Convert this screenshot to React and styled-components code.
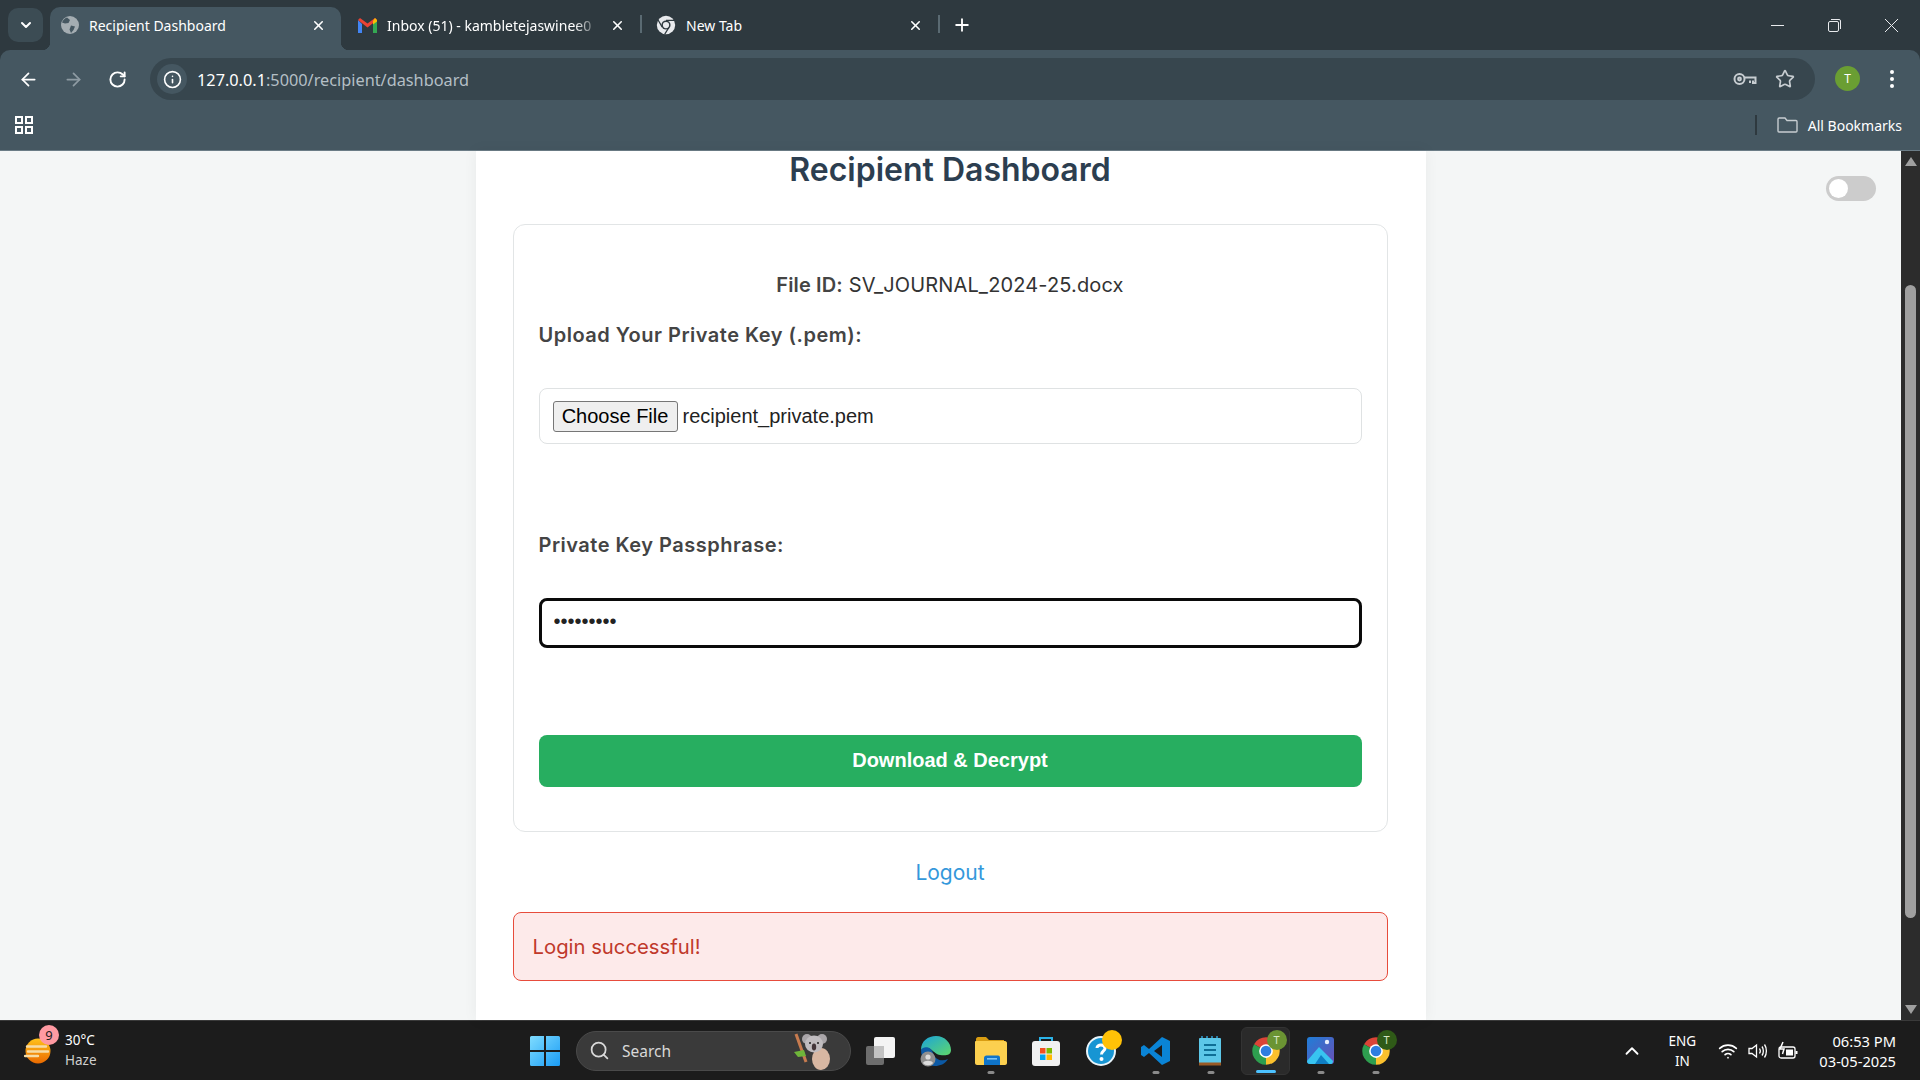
import React from "react";
import styled, { createGlobalStyle } from "styled-components";
import {
  ArrowLeft,
  ArrowRight,
  ChevronDown,
  ChevronUp,
  Info,
  Plus,
  RotateCw,
  Search,
  Star,
  Wifi,
  X,
} from "lucide-react";

const GlobalStyle = createGlobalStyle`
  html, body {
    margin: 0;
    padding: 0;
    height: 100%;
    overflow: hidden;
  }
  * { box-sizing: border-box; }
`;

const Screen = styled.div`
  width: 1920px;
  height: 1080px;
  display: flex;
  flex-direction: column;
  overflow: hidden;
  background: #2e393f;
  font-family: "Noto Sans", sans-serif;
`;

/* browser chrome */
const TabStrip = styled.div`
  height: 50px;
  flex: none;
  background: #2e393f;
  display: flex;
  align-items: flex-end;
  padding-left: 8px;
  position: relative;
`;

const TabSearch = styled.div`
  width: 35px;
  height: 34px;
  margin: 0 7px 8px 0;
  border-radius: 10px;
  background: #3c4c54;
  color: #fff;
  display: flex;
  align-items: center;
  justify-content: center;
`;

const Tab = styled.div`
  width: ${(p) => p.$width}px;
  height: 43px;
  padding: 0 15px 7px ${(p) => p.$left}px;
  display: flex;
  align-items: center;
  gap: 10px;
  color: #fff;
  font-size: 14px;
  background: ${(p) => (p.$active ? "#455761" : "transparent")};
  border-radius: 10px 10px 0 0;
  position: relative;
  & > svg { flex: none; }
  ${(p) =>
    p.$active &&
    `
    &::before, &::after {
      content: "";
      position: absolute;
      bottom: 0;
      width: 8px;
      height: 8px;
    }
    &::before {
      left: -8px;
      background: radial-gradient(circle at 0 0, transparent 8px, #455761 8.5px);
    }
    &::after {
      right: -8px;
      background: radial-gradient(circle at 100% 0, transparent 8px, #455761 8.5px);
    }
  `}
`;

const TabTitle = styled.span`
  flex: 1;
  white-space: nowrap;
  mask-image: ${(p) =>
    p.$fade ? "linear-gradient(90deg, #000 88%, transparent)" : "none"};
`;

const TabDivider = styled.div`
  width: 2px;
  height: 18px;
  margin-bottom: 17px;
  background: #5a6a72;
  flex: none;
`;

const NewTab = styled.div`
  margin: 0 0 15px 12px;
  color: #fff;
  display: flex;
`;

const WindowControls = styled.div`
  margin-left: auto;
  align-self: flex-start;
  display: flex;
  color: #e8eaed;
`;

const WindowButton = styled.div`
  width: 57px;
  height: 50px;
  display: flex;
  align-items: center;
  justify-content: center;
`;

const Toolbar = styled.div`
  height: 50px;
  flex: none;
  background: #455761;
  border-radius: 10px 10px 0 0;
  display: flex;
  padding-top: 8px;
  color: #fff;
`;

const NavGroup = styled.div`
  width: 150px;
  height: 42px;
  padding-left: 18px;
  display: flex;
  align-items: center;
  gap: 24px;
`;

const Omnibox = styled.div`
  width: 1665px;
  height: 42px;
  border-radius: 21px;
  background: #37464e;
  display: flex;
  align-items: center;
  padding: 0 20px 0 7px;
`;

const SiteInfo = styled.div`
  width: 30px;
  height: 30px;
  border-radius: 50%;
  background: #455761;
  display: flex;
  align-items: center;
  justify-content: center;
  margin-right: 10px;
`;

const Url = styled.div`
  flex: 1;
  font-size: 16.3px;
  line-height: 24px;
  padding-top: 1px;
  color: #b4bfc5;
  b {
    font-weight: 400;
    color: #fff;
  }
`;

const OmniIcons = styled.div`
  display: flex;
  align-items: center;
  gap: 18px;
  color: #c7cdd1;
`;

const Avatar = styled.div`
  width: 25px;
  height: 25px;
  margin: 8px 0 0 20px;
  border-radius: 50%;
  background: #6a9e33;
  color: #fff;
  font-size: 12px;
  display: flex;
  align-items: center;
  justify-content: center;
`;

const MenuDots = styled.div`
  margin: 8px 0 0 30px;
  height: 25px;
  display: flex;
  flex-direction: column;
  justify-content: center;
  gap: 3px;
  span {
    width: 4px;
    height: 4px;
    border-radius: 50%;
    background: #fff;
  }
`;

const BookmarkBar = styled.div`
  height: 51px;
  flex: none;
  background: #455761;
  border-bottom: 1px solid #6b7c86;
  display: flex;
  align-items: center;
  padding: 0 18px 0 15px;
  color: #fff;
`;

const AllBookmarks = styled.div`
  margin-left: auto;
  display: flex;
  align-items: center;
  gap: 10px;
  font-size: 14px;
`;

const BarDivider = styled.div`
  width: 2px;
  height: 20px;
  background: #2e393f;
  margin-right: 10px;
`;

/* page */
const Viewport = styled.div`
  flex: 1;
  min-height: 0;
  display: flex;
  background: #f4f6f6;
  position: relative;
`;

const PageArea = styled.div`
  flex: 1;
  display: flex;
  justify-content: center;
`;

const Card = styled.main`
  width: 950px;
  height: 100%;
  background: #fff;
  padding: 0 38px 0 37px;
  box-shadow: 0 0 14px rgba(0, 0, 0, 0.05);
  color: #2c3e50;
  font-family: Inter, "Noto Sans", sans-serif;
`;

const Title = styled.h1`
  margin: 0;
  height: 36px;
  line-height: 38px;
  font-size: 32px;
  font-weight: 600;
  text-align: center;
  color: #2c3e50;
`;

const Panel = styled.form`
  margin-top: 37px;
  height: 608px;
  border: 1px solid #e2e5e6;
  border-radius: 12px;
  padding: 45px 25px 0;
  display: flex;
  flex-direction: column;
`;

const FileId = styled.p`
  margin: 0;
  height: 30px;
  line-height: 30px;
  text-align: center;
  font-size: 20px;
  letter-spacing: 0.14px;
  color: #333;
  b {
    font-weight: 600;
    color: #444;
  }
`;

const FieldLabel = styled.label`
  display: block;
  height: 24px;
  line-height: 24px;
  font-size: 20px;
  letter-spacing: 0.5px;
  font-weight: 600;
  color: #444;
  margin-top: ${(p) => p.$top}px;
`;

const FileBox = styled.div`
  margin-top: 41px;
  height: 56px;
  border: 1px solid #dfe2e3;
  border-radius: 8px;
  padding: 0 13px;
  display: flex;
  align-items: center;
  gap: 5px;
  font-family: "Liberation Sans", Arial, sans-serif;
  font-size: 20px;
  color: #222;
`;

const ChooseFile = styled.button`
  height: 31px;
  width: 125px;
  padding: 0;
  background: #efefef;
  border: 1px solid #767676;
  border-radius: 3px;
  font-family: inherit;
  font-size: 20px;
  color: #000;
`;

const PassInput = styled.input`
  display: block;
  margin-top: 41px;
  width: 100%;
  height: 50px;
  padding: 0 12px 3px;
  border: 3px solid #0a0a0a;
  border-radius: 8px;
  outline: none;
  font-family: "Liberation Sans", Arial, sans-serif;
  font-size: 20px;
  color: #222;
`;

const Submit = styled.button`
  margin-top: 87px;
  width: 100%;
  height: 52px;
  padding: 0 0 2px;
  border: none;
  border-radius: 8px;
  background: #27ae60;
  color: #fff;
  font-family: "Liberation Sans", Arial, sans-serif;
  font-weight: 700;
  font-size: 20px;
`;

const LogoutLink = styled.a`
  display: block;
  margin-top: 25px;
  height: 30px;
  line-height: 32px;
  text-align: center;
  font-size: 21px;
  color: #3498db;
`;

const Flash = styled.div`
  margin-top: 25px;
  height: 69px;
  padding: 0 19px;
  display: flex;
  align-items: center;
  background: #fdeaea;
  border: 1px solid #e74c3c;
  border-radius: 8px;
  font-size: 20.3px;
  color: #c0392b;
`;

const Toggle = styled.div`
  position: absolute;
  top: 25px;
  right: 44px;
  width: 50px;
  height: 25px;
  border-radius: 13px;
  background: #ccc;
  &::before {
    content: "";
    position: absolute;
    top: 3px;
    left: 3px;
    width: 19px;
    height: 19px;
    border-radius: 50%;
    background: #fff;
  }
`;

const Scrollbar = styled.div`
  width: 19px;
  flex: none;
  background: #2c2c2c;
  display: flex;
  flex-direction: column;
  align-items: center;
  justify-content: space-between;
  padding: 6px 0;
  position: relative;
`;

const ScrollThumb = styled.div`
  position: absolute;
  top: 134px;
  left: 4px;
  width: 11px;
  height: 633px;
  border-radius: 6px;
  background: #9f9f9f;
`;

const ScrollArrow = styled.div`
  width: 0;
  height: 0;
  border-left: 6px solid transparent;
  border-right: 6px solid transparent;
  ${(p) =>
    p.$down ? "border-top: 9px solid #9f9f9f;" : "border-bottom: 9px solid #9f9f9f;"}
`;

/* taskbar */
const Taskbar = styled.footer`
  height: 60px;
  flex: none;
  background: #1c1c1c;
  border-top: 1px solid #3a3a3a;
  display: flex;
  align-items: center;
  color: #fff;
`;

const Weather = styled.div`
  width: 517px;
  padding-left: 24px;
  display: flex;
  align-items: center;
  gap: 11px;
  flex: none;
`;

const WeatherIcon = styled.div`
  position: relative;
  width: 30px;
  height: 30px;
  display: flex;
`;

const WeatherBadge = styled.span`
  position: absolute;
  top: -11px;
  left: 15px;
  width: 20px;
  height: 20px;
  border-radius: 50%;
  background: #ff9aa2;
  color: #1c1c1c;
  font-size: 13px;
  display: flex;
  align-items: center;
  justify-content: center;
`;

const WeatherText = styled.div`
  font-size: 13.5px;
  line-height: 20px;
  margin-top: -2px;
  span {
    display: block;
    color: #cfcfcf;
  }
`;

const TaskItem = styled.div`
  position: relative;
  width: 55px;
  height: 48px;
  flex: none;
  display: flex;
  align-items: center;
  justify-content: center;
  border-radius: 6px;
  ${(p) =>
    p.$active &&
    "background: #2a2a2a; border: 1px solid #333; width: 49px; margin: 0 3px;"}
`;

const RunDot = styled.span`
  position: absolute;
  bottom: 1px;
  left: 50%;
  transform: translateX(-50%);
  height: 3px;
  border-radius: 2px;
  width: ${(p) => (p.$active ? "20px" : "7px")};
  background: ${(p) => (p.$active ? "#4cc2ff" : "#8a8a8a")};
`;

const SearchPill = styled.div`
  width: 275px;
  height: 40px;
  margin: 0 2px 0 4px;
  flex: none;
  border-radius: 20px;
  background: #3a3a3a;
  border: 1px solid #4a4a4a;
  padding: 0 14px 0 12px;
  display: flex;
  align-items: center;
  gap: 12px;
  color: #d8d8d8;
  font-size: 15.5px;
  span {
    flex: 1;
  }
`;

const Tray = styled.div`
  margin-left: auto;
  padding-right: 24px;
  display: flex;
  align-items: center;
  font-size: 13.5px;
`;

const TrayIcon = styled.div`
  display: flex;
  margin-left: ${(p) => p.$left || 0}px;
`;

const Lang = styled.div`
  margin-left: 19px;
  width: 40px;
  text-align: center;
  line-height: 20px;
`;

const Clock = styled.div`
  margin-left: 21px;
  text-align: right;
  line-height: 20px;
  font-size: 14.7px;
`;

const BadgeWrap = styled.div`
  position: relative;
  display: flex;
`;

const TBadge = styled.span`
  position: absolute;
  top: -6px;
  right: -6px;
  width: 20px;
  height: 20px;
  border-radius: 50%;
  background: ${(p) => p.$bg};
  color: #d7e6c4;
  font-size: 11px;
  display: flex;
  align-items: center;
  justify-content: center;
`;

/* drawn icons */
const ChromeLogo = ({ size = 30, mono }) => (
  <svg width={size} height={size} viewBox="0 0 48 48">
    {mono ? (
      <>
        <circle cx="24" cy="24" r="22" fill="#e8eaed" />
        <circle cx="24" cy="24" r="11" fill="#2e393f" />
        <circle cx="24" cy="24" r="7.5" fill="#e8eaed" />
        <path d="M24 13H44M15 29L5 12M31 30L21 46" stroke="#2e393f" strokeWidth="3" />
      </>
    ) : (
      <>
        <path d="M24 24L4.95 13A22 22 0 0 1 43.05 13Z" fill="#db4437" />
        <path d="M24 24L43.05 13A22 22 0 0 1 24 46Z" fill="#fbc02d" />
        <path d="M24 24L24 46A22 22 0 0 1 4.95 13Z" fill="#2e9e4f" />
        <circle cx="24" cy="24" r="11" fill="#fff" />
        <circle cx="24" cy="24" r="8.5" fill="#2f7de1" />
      </>
    )}
  </svg>
);

const GlobeFavicon = () => (
  <svg width="18" height="18" viewBox="0 0 18 18">
    <circle cx="9" cy="9" r="9" fill="#a4adb2" />
    <path
      d="M6 1.5L9 4 7.5 7 4 7.5 1 6.5C2 4 3.5 2.5 6 1.5ZM10 9.5L14 10.5 12.5 14 10 17 8.5 13.5Z"
      fill="#455761"
    />
  </svg>
);

const GmailIcon = () => (
  <svg width="19" height="15" viewBox="0 0 19 15">
    <path d="M0 2V15H4V6Z" fill="#4285f4" />
    <path d="M15 6V15H19V2Z" fill="#34a853" />
    <path d="M0 2L9.5 9.5 19 2 17 0 9.5 5.5 2 0Z" fill="#ea4335" />
    <path d="M15 3V6.5L19 3.5V2L17 0Z" fill="#fbbc04" />
  </svg>
);

const KeyIcon = () => (
  <svg width="24" height="14" viewBox="0 0 24 14" fill="none" stroke="#c7cdd1" strokeWidth="2">
    <circle cx="6.5" cy="7" r="5" />
    <circle cx="6.5" cy="7" r="1.4" />
    <path d="M11.5 5.5H22.5V11H20V8.5M17 8.5V11" />
  </svg>
);

const AppsGrid = () => (
  <svg width="18" height="18" viewBox="0 0 18 18" fill="none" stroke="#fff" strokeWidth="2">
    <rect x="1" y="1" width="6" height="6" />
    <rect x="11" y="1" width="6" height="6" />
    <rect x="1" y="11" width="6" height="6" />
    <rect x="11" y="11" width="6" height="6" />
  </svg>
);

const FolderOutline = () => (
  <svg width="21" height="16" viewBox="0 0 21 16" fill="none" stroke="#c7cdd1" strokeWidth="1.4">
    <path d="M1 2.2C1 1.4 1.4 1 2.2 1H8L10 3.5H19C19.6 3.5 20 3.9 20 4.5V14C20 14.6 19.6 15 19 15H2C1.4 15 1 14.6 1 14Z" />
  </svg>
);

const SunHaze = () => (
  <svg width="30" height="30" viewBox="0 0 30 30">
    <defs>
      <linearGradient id="sunGrad" x1="0" y1="0" x2="0" y2="1">
        <stop offset="0" stopColor="#ffc21a" />
        <stop offset="1" stopColor="#ea6a00" />
      </linearGradient>
    </defs>
    <circle cx="14" cy="15" r="12.5" fill="url(#sunGrad)" />
    <path d="M3 10.5H22M4 15.5H24M1 20H14" stroke="#f6dca6" strokeWidth="2.4" strokeLinecap="round" />
  </svg>
);

const KoalaArt = () => (
  <svg width="44" height="38" viewBox="0 0 44 38">
    <path d="M4 2L14 30" stroke="#c77b4f" strokeWidth="3" />
    <path d="M2 20L12 18 14 24 6 25Z" fill="#6fb53a" />
    <ellipse cx="29" cy="27" rx="9" ry="11" fill="#d8b7a2" />
    <circle cx="15" cy="7" r="5" fill="#a9a5a8" />
    <circle cx="30" cy="7" r="5" fill="#a9a5a8" />
    <ellipse cx="22" cy="12" rx="9" ry="8.5" fill="#c0bcbf" />
    <ellipse cx="22" cy="15" rx="2.2" ry="3.4" fill="#43363a" />
    <circle cx="18" cy="11" r="1" fill="#222" />
    <circle cx="26" cy="11" r="1" fill="#222" />
  </svg>
);

const StartLogo = () => (
  <svg width="30" height="30" viewBox="0 0 30 30">
    <defs>
      <linearGradient id="startGrad" x1="0" y1="0" x2="1" y2="1">
        <stop offset="0" stopColor="#7fdcff" />
        <stop offset="1" stopColor="#1a9cf5" />
      </linearGradient>
    </defs>
    <path
      d="M0 1.5A1.5 1.5 0 0 1 1.5 0H14V14H0ZM16 0H28.5A1.5 1.5 0 0 1 30 1.5V14H16ZM0 16H14V30H1.5A1.5 1.5 0 0 1 0 28.5ZM16 16H30V28.5A1.5 1.5 0 0 1 28.5 30H16Z"
      fill="url(#startGrad)"
    />
  </svg>
);

const TaskView = () => (
  <svg width="32" height="30" viewBox="0 0 32 30">
    <rect x="1" y="10" width="18" height="19" rx="2" fill="#6d6d6d" />
    <rect x="9" y="1" width="21" height="21" rx="2" fill="#f4f4f4" />
    <rect x="9" y="10" width="10" height="12" fill="#c2c2c2" />
  </svg>
);

const EdgeIcon = () => (
  <svg width="32" height="32" viewBox="0 0 32 32">
    <defs>
      <linearGradient id="edgeGrad" x1="0" y1="0" x2="1" y2="1">
        <stop offset="0" stopColor="#1aa3dc" />
        <stop offset="1" stopColor="#5fd86a" />
      </linearGradient>
    </defs>
    <path d="M1 15C1 6 8 1 16 1C25 1 31 8 31 15C31 20 26 21 20 20C14 19 12 13 7 13C4 13 2 14 1 15Z" fill="url(#edgeGrad)" />
    <path d="M1 15C3 11 11 11 13 18C15 25 22 27 28 24C25 29 20 31 15 31C7 31 1 24 1 15Z" fill="#0c59a4" />
    <circle cx="8" cy="24" r="7.5" fill="#8f8f8f" />
    <circle cx="8" cy="22" r="2.6" fill="#dcdcdc" />
    <path d="M3 28C4 25 12 25 13 28C11 31 5 31 3 28Z" fill="#dcdcdc" />
  </svg>
);

const ExplorerIcon = () => (
  <svg width="32" height="28" viewBox="0 0 32 28">
    <path d="M1 2C1 1 2 0 3 0H11L14 3H29V8H1Z" fill="#d99d12" />
    <path d="M1 4H30C31 4 32 5 32 6V26C32 27 31 28 30 28H2C1 28 0 27 0 26V5C0 4.5 .5 4 1 4Z" fill="#fcd04f" />
    <path d="M9 21C9 19.5 10 18.5 11.5 18.5H23C24.5 18.5 25 19.5 25 21V28H9Z" fill="#0f74c9" />
    <rect x="12" y="21" width="10" height="1.6" fill="#7cc4f5" />
  </svg>
);

const StoreIcon = () => (
  <svg width="30" height="30" viewBox="0 0 30 30">
    <path d="M9 7V2H21V7" fill="none" stroke="#2bb3e8" strokeWidth="2" />
    <rect x="1" y="5" width="28" height="25" rx="3" fill="#f1f1f1" />
    <rect x="9" y="12" width="5.5" height="5.5" fill="#f25022" />
    <rect x="15.5" y="12" width="5.5" height="5.5" fill="#7fba00" />
    <rect x="9" y="18.5" width="5.5" height="5.5" fill="#00a4ef" />
    <rect x="15.5" y="18.5" width="5.5" height="5.5" fill="#ffb900" />
  </svg>
);

const HelpIcon = () => (
  <BadgeWrap>
    <svg width="30" height="30" viewBox="0 0 30 30">
      <circle cx="15" cy="15" r="14" fill="#1795d3" stroke="#e8f4fa" strokeWidth="2" />
      <path d="M11 12C11 8 19 8 19 12.5C19 15 15.5 15 15.5 18.5" fill="none" stroke="#fff" strokeWidth="3" />
      <circle cx="15.5" cy="23" r="2" fill="#fff" />
    </svg>
    <TBadge $bg="#ffc107" />
  </BadgeWrap>
);

const VsCodeIcon = () => (
  <svg width="30" height="30" viewBox="0 0 30 30">
    <path d="M21 1L29 5V25L21 29 8 17 3 21 0 19V11L3 9 8 13ZM21 9L13 15 21 21Z" fill="#0a84d6" />
  </svg>
);

const NotepadIcon = () => (
  <svg width="23" height="30" viewBox="0 0 23 30">
    <rect x="0" y="2" width="22" height="26" rx="1" fill="#5cc7e8" />
    <rect x="0" y="26.5" width="22" height="3" fill="#9a5a25" />
    <path d="M3 2V0M8 2V0M13 2V0M18 2V0" stroke="#2c7fa8" strokeWidth="2" />
    <path d="M5 9H17M5 14H17M5 19H17" stroke="#0f6f96" strokeWidth="2" />
  </svg>
);

const PhotosIcon = () => (
  <svg width="27" height="27" viewBox="0 0 27 27">
    <defs>
      <linearGradient id="photoGrad" x1="0" y1="0" x2="1" y2="1">
        <stop offset="0" stopColor="#1f7ed8" />
        <stop offset="1" stopColor="#6a4fb5" />
      </linearGradient>
    </defs>
    <rect width="27" height="27" rx="3" fill="url(#photoGrad)" />
    <circle cx="20" cy="5" r="2.2" fill="#e6eefc" />
    <path d="M0 24L12 10 26 24C26 26 25 27 24 27H3C1 27 0 26 0 24Z" fill="#38c4f0" />
    <path d="M8 27L14 18 22 27Z" fill="#0f7fc4" />
  </svg>
);

const VolumeIcon = () => (
  <svg width="20" height="18" viewBox="0 0 20 18" fill="none" stroke="#fff" strokeWidth="1.3">
    <path d="M1 6.5H4L8.5 3V15L4 11.5H1Z" />
    <path d="M11.5 6.5C12.5 8 12.5 10 11.5 11.5M14 4.5C15.8 7 15.8 11 14 13.5M16.5 2.5C19 6 19 12 16.5 15.5" />
  </svg>
);

const BatteryIcon = () => (
  <svg width="20" height="20" viewBox="0 0 20 20" fill="none" stroke="#fff" strokeWidth="1.3">
    <rect x="1" y="6" width="16" height="11" rx="2" />
    <rect x="8" y="8.5" width="7" height="6" fill="#fff" stroke="none" />
    <path d="M18.5 10V13" strokeWidth="2" />
    <path d="M5 1L2 8H6L4.5 13" strokeWidth="1.5" stroke="#fff" />
  </svg>
);

const RestoreIcon = () => (
  <svg width="13" height="13" viewBox="0 0 13 13" fill="none" stroke="#e8eaed">
    <rect x="0.5" y="2.5" width="10" height="10" rx="1.5" />
    <path d="M3 .5H11A1.5 1.5 0 0 1 12.5 2V10" />
  </svg>
);

const MinimizeIcon = () => (
  <svg width="13" height="13" viewBox="0 0 13 13" stroke="#e8eaed">
    <path d="M0 6.5H13" />
  </svg>
);

const CloseIcon = () => (
  <svg width="13" height="13" viewBox="0 0 13 13" stroke="#e8eaed">
    <path d="M0 0L13 13M13 0L0 13" />
  </svg>
);

const taskApps = [
  { key: "edge", icon: <EdgeIcon /> },
  { key: "files", icon: <ExplorerIcon />, running: true },
  { key: "store", icon: <StoreIcon /> },
  { key: "help", icon: <HelpIcon /> },
  { key: "code", icon: <VsCodeIcon />, running: true },
  { key: "notes", icon: <NotepadIcon />, running: true },
  {
    key: "chrome",
    active: true,
    running: true,
    icon: (
      <BadgeWrap>
        <ChromeLogo />
        <TBadge $bg="#6b9433">T</TBadge>
      </BadgeWrap>
    ),
  },
  { key: "photos", icon: <PhotosIcon />, running: true },
  {
    key: "chrome2",
    running: true,
    icon: (
      <BadgeWrap>
        <ChromeLogo />
        <TBadge $bg="#2f5a17">T</TBadge>
      </BadgeWrap>
    ),
  },
];

const App = () => {
  return (
    <Screen>
      <GlobalStyle />
      <TabStrip>
        <TabSearch>
          <ChevronDown size={16} strokeWidth={3} />
        </TabSearch>
        <Tab $active $width={291} $left={11}>
          <GlobeFavicon />
          <TabTitle>Recipient Dashboard</TabTitle>
          <X size={15} strokeWidth={2.5} />
        </Tab>
        <Tab $width={299} $left={17}>
          <GmailIcon />
          <TabTitle $fade>Inbox (51) - kambletejaswinee0</TabTitle>
          <X size={15} strokeWidth={2.5} />
        </Tab>
        <TabDivider />
        <Tab $width={296} $left={14}>
          <ChromeLogo size={20} mono />
          <TabTitle>New Tab</TabTitle>
          <X size={15} strokeWidth={2.5} />
        </Tab>
        <TabDivider />
        <NewTab>
          <Plus size={20} strokeWidth={2.2} />
        </NewTab>
        <WindowControls>
          <WindowButton>
            <MinimizeIcon />
          </WindowButton>
          <WindowButton>
            <RestoreIcon />
          </WindowButton>
          <WindowButton>
            <CloseIcon />
          </WindowButton>
        </WindowControls>
      </TabStrip>

      <Toolbar>
        <NavGroup>
          <ArrowLeft size={21} />
          <ArrowRight size={21} color="#8e9ba3" />
          <RotateCw size={19} strokeWidth={2.4} />
        </NavGroup>
        <Omnibox>
          <SiteInfo>
            <Info size={19} />
          </SiteInfo>
          <Url>
            <b>127.0.0.1</b>:5000/recipient/dashboard
          </Url>
          <OmniIcons>
            <KeyIcon />
            <Star size={20} />
          </OmniIcons>
        </Omnibox>
        <Avatar>T</Avatar>
        <MenuDots>
          <span />
          <span />
          <span />
        </MenuDots>
      </Toolbar>

      <BookmarkBar>
        <AppsGrid />
        <AllBookmarks>
          <BarDivider />
          <FolderOutline />
          All Bookmarks
        </AllBookmarks>
      </BookmarkBar>

      <Viewport>
        <PageArea>
          <Card>
            <Title>Recipient Dashboard</Title>
            <Panel>
              <FileId>
                <b>File ID:</b> SV_JOURNAL_2024-25.docx
              </FileId>
              <FieldLabel $top={23}>Upload Your Private Key (.pem):</FieldLabel>
              <FileBox>
                <ChooseFile type="button">Choose File</ChooseFile>
                recipient_private.pem
              </FileBox>
              <FieldLabel $top={89}>Private Key Passphrase:</FieldLabel>
              <PassInput type="password" defaultValue="secret123" />
              <Submit type="button">Download &amp; Decrypt</Submit>
            </Panel>
            <LogoutLink>Logout</LogoutLink>
            <Flash>Login successful!</Flash>
          </Card>
        </PageArea>
        <Toggle />
        <Scrollbar>
          <ScrollArrow />
          <ScrollThumb />
          <ScrollArrow $down />
        </Scrollbar>
      </Viewport>

      <Taskbar>
        <Weather>
          <WeatherIcon>
            <SunHaze />
            <WeatherBadge>9</WeatherBadge>
          </WeatherIcon>
          <WeatherText>
            30°C
            <span>Haze</span>
          </WeatherText>
        </Weather>
        <TaskItem>
          <StartLogo />
        </TaskItem>
        <SearchPill>
          <Search size={21} />
          <span>Search</span>
          <KoalaArt />
        </SearchPill>
        <TaskItem>
          <TaskView />
        </TaskItem>
        {taskApps.map((app) => (
          <TaskItem key={app.key} $active={app.active}>
            {app.icon}
            {app.running && <RunDot $active={app.active} />}
          </TaskItem>
        ))}
        <Tray>
          <ChevronUp size={22} />
          <Lang>
            ENG
            <br />
            IN
          </Lang>
          <TrayIcon $left={16}>
            <Wifi size={20} />
          </TrayIcon>
          <TrayIcon $left={10}>
            <VolumeIcon />
          </TrayIcon>
          <TrayIcon $left={10}>
            <BatteryIcon />
          </TrayIcon>
          <Clock>
            06:53 PM
            <br />
            03-05-2025
          </Clock>
        </Tray>
      </Taskbar>
    </Screen>
  );
};

export default App;
